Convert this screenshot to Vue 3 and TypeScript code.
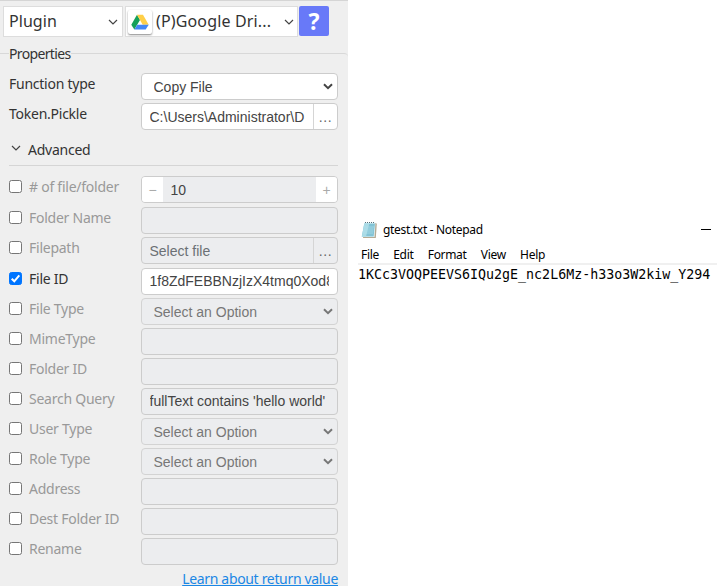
<script setup lang="ts">
type Kind = 'text' | 'select' | 'file' | 'number'
interface Field {
  label: string
  kind: Kind
  value: string
  checked?: boolean
  tall?: boolean
  dark?: boolean
}
const fields: Field[] = [
  { label: '# of file/folder', kind: 'number', value: '10', tall: true },
  { label: 'Folder Name', kind: 'text', value: '' },
  { label: 'Filepath', kind: 'file', value: 'Select file', tall: true },
  { label: 'File ID', kind: 'text', value: '1f8ZdFEBBNzjIzX4tmq0Xod8', checked: true },
  { label: 'File Type', kind: 'select', value: 'Select an Option' },
  { label: 'MimeType', kind: 'text', value: '' },
  { label: 'Folder ID', kind: 'text', value: '' },
  { label: 'Search Query', kind: 'text', value: "fullText contains 'hello world'", dark: true },
  { label: 'User Type', kind: 'select', value: 'Select an Option' },
  { label: 'Role Type', kind: 'select', value: 'Select an Option' },
  { label: 'Address', kind: 'text', value: '' },
  { label: 'Dest Folder ID', kind: 'text', value: '' },
  { label: 'Rename', kind: 'text', value: '' },
]
const menus = ['File', 'Edit', 'Format', 'View', 'Help']
</script>

<template>
  <main class="screen">
    <section class="panel">
      <header class="top">
        <div class="combo plugin">
          <span>Plugin</span>
          <svg class="thin" viewBox="0 0 10 6"><path d="M1 1l4 4 4-4" /></svg>
        </div>
        <div class="combo drive">
          <span class="logo">
            <svg viewBox="0 0 18 16">
              <path fill="#15a05b" d="M6 .8L.3 10.700l3 4.800L9 6z" />
              <path fill="#ffcf48" d="M6 .8h6l5.700 9.900h-6z" />
              <path fill="#4387f5" d="M6.300 10.700h11.400l-3 4.800H3.300z" />
            </svg>
          </span>
          <span class="drive-name">(P)Google Dri...</span>
          <svg class="thin" viewBox="0 0 10 6"><path d="M1 1l4 4 4-4" /></svg>
        </div>
        <button class="help">?</button>
      </header>

      <div class="legend"><i class="lead"></i><span>Properties</span><i class="rest"></i></div>

      <div class="row basic">
        <label>Function type</label>
        <div class="box select active"><span class="val">Copy File</span>
          <svg class="bold" viewBox="0 0 10 7"><path d="M1 1.200l4 4 4-4" /></svg></div>
      </div>
      <div class="row basic">
        <label>Token.Pickle</label>
        <div class="box file active"><span class="val">C:\Users\Administrator\D</span><span class="dots">...</span></div>
      </div>

      <div class="advanced">
        <svg class="thin" viewBox="0 0 10 6"><path d="M1 1l4 4 4-4" /></svg>
        <span>Advanced</span>
      </div>

      <div v-for="f in fields" :key="f.label" class="row opt" :class="{ tall: f.tall, on: f.checked }">
        <span class="check"><svg v-if="f.checked" viewBox="0 0 13 13"><path d="M2.700 6.700l2.600 2.600 5-5.900" /></svg></span>
        <label>{{ f.label }}</label>
        <div class="box" :class="[f.kind, { active: f.checked, dark: f.dark }]">
          <span v-if="f.kind === 'number'" class="step">−</span>
          <span class="val">{{ f.value }}</span>
          <span v-if="f.kind === 'number'" class="step">+</span>
          <span v-if="f.kind === 'file'" class="dots">...</span>
          <svg v-if="f.kind === 'select'" class="bold" viewBox="0 0 10 7"><path d="M1 1.200l4 4 4-4" /></svg>
        </div>
      </div>
      <a class="learn">Learn about return value</a>
    </section>

    <section class="notepad">
      <div class="title">
        <svg class="note" viewBox="0 0 16 17">
          <path fill="#b5aa94" d="M4 2h11l.8 1-1 14H2z" />
          <path fill="#edf8fa" d="M3.500 1.500h11L13.500 16H.5z" />
          <path fill="#83c4d6" d="M3.300 2.500h10.700L12.700 15.500H.8z" />
          <path fill="#a9dbe6" d="M3.300 2.500h5L5 15.500H.8z" />
          <path stroke="#b7e3ec" stroke-width=".6" d="M3 6h10M2.500 8h10M2.200 10h10M2 12h10" />
          <path stroke="#57717b" stroke-dasharray="1 1" d="M4 1.500h10" />
        </svg>
        <span>gtest.txt - Notepad</span>
        <i class="min"></i>
      </div>
      <nav><span v-for="m in menus" :key="m">{{ m }}</span></nav>
      <div class="content">1KCc3VOQPEEVS6IQu2gE_nc2L6Mz-h33o3W2kiw_Y294</div>
    </section>
  </main>
</template>

<style>
body { background: #fff; overflow: hidden; }
</style>
<style scoped>
* { box-sizing: border-box; }
.screen { display: flex; width: 717px; height: 586px; overflow: hidden; font-family: "Noto Sans", sans-serif; }
.panel { width: 348px; height: 586px; background: #efefef; border-top: 1px solid #d5d5d5; padding-top: 5px; overflow: hidden; color: #333; font-size: 14px; letter-spacing: -.25px; }
svg { fill: none; display: block; flex: none; }
.top { display: flex; height: 31px; padding-left: 3px; }
.combo { height: 31px; background: #fff; border: 1px solid #ddd; display: flex; align-items: center; font-size: 16px; color: #333; white-space: nowrap; letter-spacing: .05px; }
.combo > span:not(.logo) { margin-top: -2px; }
.plugin { width: 120px; padding: 0 4px 0 5px; justify-content: space-between; margin-right: 2px; }
.drive { width: 173px; padding: 0 3px 0 2px; margin-right: 1px; }
.drive-name { letter-spacing: .15px; }
.drive .thin { margin-left: auto; }
.thin { width: 10px; height: 6px; stroke: #444; stroke-width: 1.200; }
.bold { width: 10px; height: 7px; stroke: #444; stroke-width: 2; }
.logo { width: 24px; height: 24px; border-radius: 2px; background: #fff; box-shadow: 0 1px 2px #888; display: grid; place-items: center; margin-right: 4px; }
.logo svg { width: 18px; height: 16px; }
.help { width: 30px; height: 30px; border: 0; border-radius: 2px; background: #6879f8; color: #fff; font: bold 23px/28px "Noto Sans", sans-serif; padding: 0; }
.legend { display: flex; height: 35px; padding-top: 7px; line-height: 20px; letter-spacing: -.65px; }
.legend i { border-top: 1px solid #d8d8d8; margin-top: 9px; height: 5px; }
.legend .lead { width: 9px; }
.legend .rest { flex: 1; border-top-right-radius: 4px; }
.row { display: flex; height: 30px; padding-left: 9px; align-items: flex-start; line-height: 20px; white-space: nowrap; }
.row.tall { height: 31px; }
.basic { margin-top: 1px; height: 29px; }
.basic label { width: 132px; margin-top: 1px; }
.box { width: 197px; height: 27px; border: 1px solid #ccc; border-radius: 4px; background: #ecedef; display: flex; align-items: center; font: 14px/25px "Liberation Sans", sans-serif; letter-spacing: 0; color: #6b7075; overflow: hidden; flex: none; }
.box.active { background: #fff; color: #444; }
.box.dark, .box.number { color: #444; }
.val { flex: 1; overflow: hidden; white-space: nowrap; margin: 0 8px 0 7.500px; }
.file .val, .number .val, .select .val { padding-top: 1px; }
.select .val { margin-left: 11.500px; }
.select .bold { margin-right: 4px; }
.select:not(.active) { border-color: #d3d3d3; color: #777; }
.select:not(.active) .bold { stroke: #777; }
.dots { width: 24px; align-self: stretch; border-left: 1px solid #d5d5d5; text-align: center; padding-top: 1px; letter-spacing: .6px; color: #666; }
.step { width: 21px; height: 25px; background: #fff; color: #aaa; text-align: center; line-height: 26px; }
.advanced { display: flex; align-items: center; height: 33px; margin: 1px 10px 10px 9px; border-bottom: 1px solid #d5d5d5; padding: 1px 0 0 2px; gap: 7px; }
.advanced .thin { margin-top: -3px; }
.check { width: 13px; height: 13px; margin: 4px 7px 0 0; border: 1px solid #767676; border-radius: 2.500px; background: #fff; flex: none; }
.on .check { background: #0075ff; border-color: #0075ff; }
.check svg { width: 13px; height: 13px; margin: -1px; stroke: #fff; stroke-width: 2; }
.opt label { width: 112px; color: #999; margin-top: 1px; }
.opt.on label { color: #333; }
.learn { display: block; text-align: right; color: #1b87e5; text-decoration: underline; text-underline-offset: 1px; text-decoration-thickness: 1px; padding-right: 10px; line-height: 20px; margin-top: 1px; letter-spacing: -.33px; }
.notepad { width: 369px; padding-top: 219px; color: #000; font-size: 12px; letter-spacing: -.32px; }
.title { display: flex; align-items: center; height: 21px; padding-left: 13px; }
.note { width: 16px; height: 17px; margin: -1px 6px 0 0; }
.min { width: 10px; height: 1px; background: #000; margin-left: auto; margin-right: 6px; }
nav { display: flex; height: 23px; line-height: 29px; padding-left: 13px; gap: 14.300px; }
.content { margin-left: 10px; border-top: 2px solid #f0f0f0; font: 13.300px/20px "DejaVu Sans Mono", monospace; letter-spacing: 0; white-space: nowrap; }
</style>
